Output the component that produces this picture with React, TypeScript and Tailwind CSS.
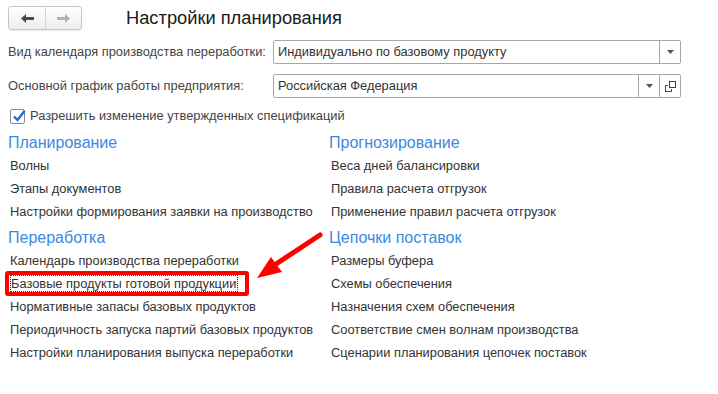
import React from 'react';

const planning = ['Волны', 'Этапы документов', 'Настройки формирования заявки на производство'];
const processing = [
  'Календарь производства переработки',
  'Базовые продукты готовой продукции',
  'Нормативные запасы базовых продуктов',
  'Периодичность запуска партий базовых продуктов',
  'Настройки планирования выпуска переработки',
];
const forecasting = ['Веса дней балансировки', 'Правила расчета отгрузок', 'Применение правил расчета отгрузок'];
const supply = [
  'Размеры буфера',
  'Схемы обеспечения',
  'Назначения схем обеспечения',
  'Соответствие смен волнам производства',
  'Сценарии планирования цепочек поставок',
];

const DropTriangle = () => (
  <svg width="7" height="4" viewBox="0 0 7 4">
    <path d="M0 0 H7 L3.5 4 Z" fill="#555" />
  </svg>
);

const Section = ({ title, items, first }: { title: string; items: string[]; first?: boolean }) => (
  <div className={first ? '' : 'mt-[4px]'}>
    <div className="h-[22px] text-[16px] leading-[22px] text-[#3b8ae0]">{title}</div>
    {items.map((item) => (
      <div key={item} className="h-[23px] leading-[23px] pl-[2px] text-[#333]">
        {item === 'Базовые продукты готовой продукции' ? (
          <span className="border border-dotted border-[#333] pr-[1px]">{item}</span>
        ) : (
          item
        )}
      </div>
    ))}
  </div>
);

const App = () => {
  return (
    <div
      className="relative w-[718px] h-[394px] bg-white text-[12.85px] text-[#333] overflow-hidden"
      style={{ fontFamily: '"Liberation Sans", Arial, sans-serif' }}
    >
      <div className="flex items-center pt-[6px] pl-[8px]">
        <div className="flex h-[24px] w-[74px] rounded-[3px] border border-[#c6c6c6] bg-gradient-to-b from-white to-[#eeeeee] shadow-[0_1px_1px_rgba(0,0,0,0.08)]">
          <div className="flex w-[37px] items-center justify-center border-r border-[#d6d6d6]">
            <svg width="13" height="9" viewBox="0 0 13 9">
              <path d="M0 4.5 L5 0 V3 H13 V6 H5 V9 Z" fill="#4a4a4a" />
            </svg>
          </div>
          <div className="flex flex-1 items-center justify-center">
            <svg width="13" height="9" viewBox="0 0 13 9">
              <path d="M13 4.5 L8 0 V3 H0 V6 H8 V9 Z" fill="#b0b0b0" />
            </svg>
          </div>
        </div>
        <h1 className="ml-[44px] text-[18.3px] leading-[24px] text-[#1a1a1a]">Настройки планирования</h1>
      </div>

      <div className="mt-[10px] flex h-[24px] items-center pl-[8px]">
        <div className="w-[265px] text-[#444]">Вид календаря производства переработки:</div>
        <div className="flex h-[24px] w-[408px] rounded-[2px] border border-[#a8a8a8]">
          <div className="flex-1 pl-[4px] leading-[22px] text-[#333]">Индивидуально по базовому продукту</div>
          <div className="flex w-[21px] items-center justify-center border-l border-[#a8a8a8]">
            <DropTriangle />
          </div>
        </div>
      </div>

      <div className="mt-[10px] flex h-[24px] items-center pl-[8px]">
        <div className="w-[265px] text-[#444]">Основной график работы предприятия:</div>
        <div className="flex h-[24px] w-[408px] rounded-[2px] border border-[#a8a8a8]">
          <div className="flex-1 pl-[4px] leading-[22px] text-[#333]">Российская Федерация</div>
          <div className="flex w-[21px] items-center justify-center border-l border-[#a8a8a8]">
            <DropTriangle />
          </div>
          <div className="flex w-[21px] items-center justify-center border-l border-[#a8a8a8]">
            <svg width="11" height="11" viewBox="0 0 11 11">
              <rect x="4.5" y="0.5" width="6" height="6" fill="none" stroke="#444" />
              <path d="M0.5 11 V4.5 H3 M0.5 10.5 H6.5 V8" fill="none" stroke="#444" />
            </svg>
          </div>
        </div>
      </div>

      <div className="mt-[10px] flex h-[16px] items-center pl-[10px]">
        <div className="relative h-[15px] w-[15px] rounded-[2px] border border-[#8a8a8a] bg-white">
          <svg className="absolute left-[1px] top-[-1px]" width="14" height="14" viewBox="0 0 14 14">
            <path d="M2 7.5 L5.5 11 L12.5 2" fill="none" stroke="#1b6ed3" strokeWidth="2.4" />
          </svg>
        </div>
        <span className="ml-[5px] text-[#444]">Разрешить изменение утвержденных спецификаций</span>
      </div>

      <div className="mt-[8px] grid grid-cols-[321px_1fr] pl-[8px]">
        <div>
          <Section title="Планирование" items={planning} first />
          <Section title="Переработка" items={processing} />
        </div>
        <div>
          <Section title="Прогнозирование" items={forecasting} first />
          <Section title="Цепочки поставок" items={supply} />
        </div>
      </div>

      <div className="absolute left-[5px] top-[271px] h-[25px] w-[244px] rounded-[3px] border-[4px] border-[#ff0000]" />
      <svg className="absolute left-0 top-0" width="718" height="394" viewBox="0 0 718 394">
        <line x1="320" y1="235" x2="270" y2="268" stroke="#ff0000" strokeWidth="5" strokeLinecap="round" />
        <polygon points="257,278 271,257 282,272" fill="#ff0000" />
      </svg>
    </div>
  );
};

export default App;
